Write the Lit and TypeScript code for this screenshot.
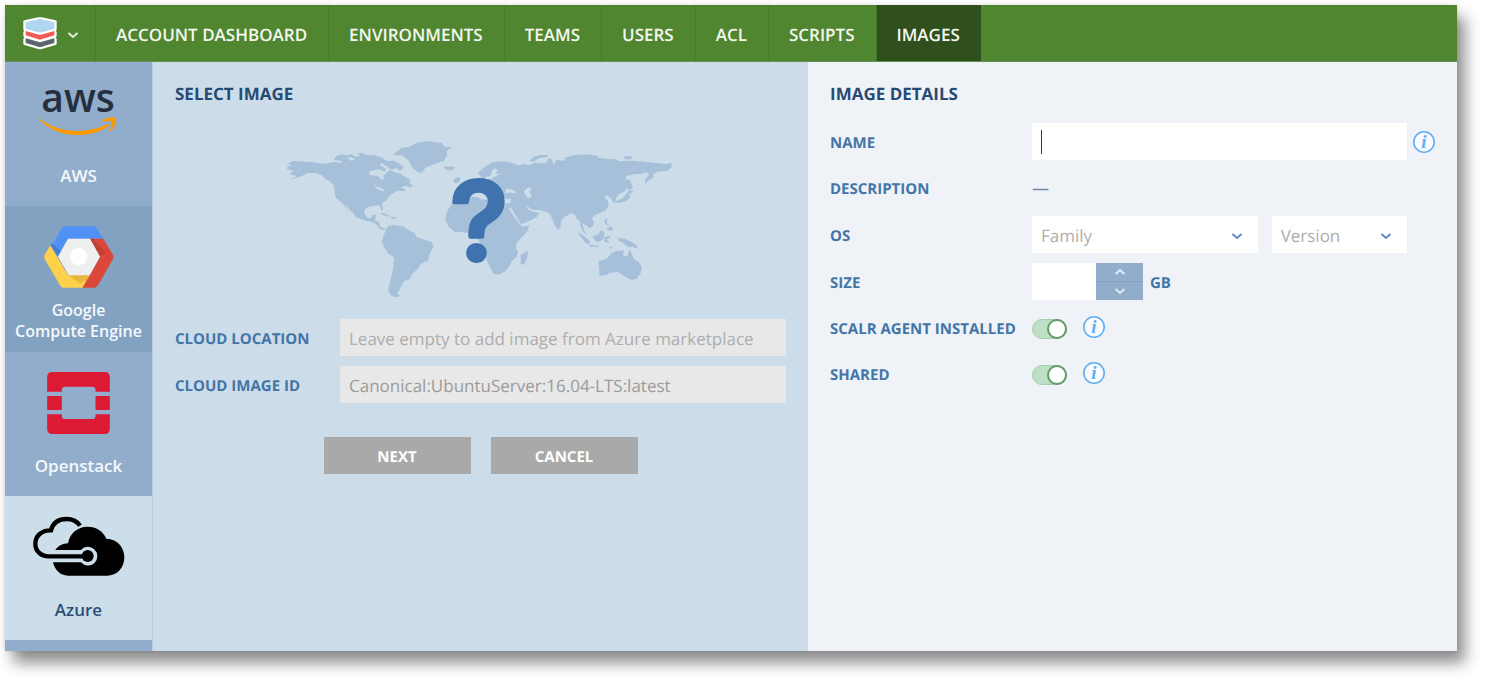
import { LitElement, html, css, svg, nothing } from "lit";
import { customElement, property, state } from "lit/decorators.js";
import { classMap } from "lit/directives/class-map.js";

const NAV = ["ACCOUNT DASHBOARD", "ENVIRONMENTS", "TEAMS", "USERS", "ACL", "SCRIPTS", "IMAGES"];

const chevron = (up = false) => html`<svg class="chevron" width="12" height="8" viewBox="0 0 12 8" aria-hidden="true">
  <path d=${up ? "M1.5 6 L6 2 L10.5 6" : "M1.5 2 L6 6 L10.5 2"} fill="none" stroke="currentColor" stroke-width="2"/>
</svg>`;

const awsLogo = html`<svg width="80" height="72" viewBox="39 66 80 72" role="img" aria-label="aws">
  <text x="78" y="112" text-anchor="middle" font-family="Open Sans, sans-serif" font-size="39" font-weight="600" fill="#252f3e">aws</text>
  <path d="M40 119 C52 128 65 131 78 131 C88 131 99 128 108 124 Q110 124 109 126 C101 132 89 135 77 135 C62 135 49 129 40 120.500 Z" fill="#ff9900"/>
  <path d="M102 120.500 C105 117.500 113 117 116 118 C117 122 114 128 111 131 Q109.500 131 110 129.500 C111 127 113 123 112 121.500 C110 120.500 106 121 102.500 121.500 Z" fill="#ff9900"/>
</svg>`;

const googleLogo = html`<svg width="70" height="62" viewBox="0 0 210 186" aria-hidden="true">
  <path d="M24 58 L52 8 Q56 1 64 1 H148 Q154 1 158 7 L178 38 H72 L42 90 Z" fill="#5091f5"/>
  <path d="M178 38 L207 86 Q210 92 207 99 L162 178 Q158 185 150 185 H115 L168 92 L138 38 Z" fill="#da483b"/>
  <path d="M19 58 L72 148 H137 L115 185 H58 Q52 185 48 178 L2 99 Q-1 92 2 86 Z" fill="#ffd04a"/>
  <path d="M138 38 H148 L186 80 L168 92 Z" fill="#b93c32" opacity=".7"/>
  <path d="M72 148 H137 L128 163 L108 172 Z" fill="#e0ac38" opacity=".7"/>
  <path d="M19 58 L24 52 L50 76 L42 92 Z" fill="#3f77d3" opacity=".8"/>
  <path d="M72 38 H138 L168 92 L137 148 H74 L42 92 Z" fill="#efefef"/>
  <circle cx="104" cy="92" r="26" fill="#fff"/>
</svg>`;

const openstackLogo = html`<svg width="63" height="62" viewBox="0 0 188 186" aria-hidden="true" fill="#dc1a33">
  <path d="M0 59 V16 Q0 0 16 0 H172 Q188 0 188 16 V59 H145 V54 Q145 44 135 44 H54 Q44 44 44 54 V59 Z"/>
  <path d="M0 72 H44 V114 H0 Z M145 72 H188 V114 H145 Z"/>
  <path d="M0 127 V170 Q0 186 16 186 H172 Q188 186 188 170 V127 H145 V131 Q145 141 135 141 H54 Q44 141 44 131 V127 Z"/>
</svg>`;

const azureLogo = html`<svg width="92" height="60" viewBox="98 64 276 180" aria-hidden="true">
  <path d="M165 166 C175 152 188 147 203 146 C208 116 232 96 261 96 C288 96 308 109 318 132 C350 132 372 158 372 187 C372 220 350 243 320 243 H203 C180 243 163 226 158 203 H242 A28 28 0 1 0 242 166 Z" fill="#000"/>
  <circle cx="262" cy="184" r="18" fill="#000"/>
  <path d="M262 185 H146 C120 185 105 168 105 147 C105 124 124 106 152 107 C158 84 176 73 199 73 C217 73 230 79 239 93" fill="none" stroke="#000" stroke-width="13"/>
</svg>`;

const PROVIDERS = [
  { name: "AWS", logo: awsLogo, kind: "aws" },
  { name: "Google\nCompute Engine", logo: googleLogo, kind: "google" },
  { name: "Openstack", logo: openstackLogo, kind: "openstack" },
  { name: "Azure", logo: azureLogo, kind: "azure" },
];

const americas = svg`<g transform="translate(280 130) scale(.33333)">
  <path d="M18 112 L34 106 24 100 40 93 58 94 100 97 128 101 165 96 188 99 182 92 162 90 168 79 185 73 200 76 214 72 225 80 242 78 232 70 246 68 262 76 280 74 304 82 320 92 342 92 372 110 362 122 345 114 336 120 318 108 304 98 300 106 318 116 316 126 300 118 282 120 266 126 272 136 294 138 302 148 312 148 310 138 320 128 328 120 350 128 364 132 374 140 392 150 388 160 400 168 392 172 378 168 362 172 376 178 374 184 354 182 340 190 330 196 320 210 306 220 310 240 304 240 298 226 280 228 262 232 254 240 254 252 262 264 274 264 276 254 288 254 286 266 284 272 298 276 300 290 312 294 320 296 312 300 300 296 288 282 274 276 250 270 228 262 218 248 206 236 196 222 204 242 214 250 204 244 190 222 168 204 164 188 163 168 150 154 136 148 128 138 112 130 84 128 66 138 32 149 50 138 28 132 40 122 22 118 Z"/>
  <path d="M338 75 L364 54 388 50 412 38 444 33 486 39 492 50 516 52 500 64 502 76 492 92 458 104 438 112 424 129 412 126 396 112 384 90 366 76 Z"/>
  <path d="M490 110 L526 110 522 117 508 122 496 118 Z M298 248 L314 250 328 258 324 260 308 254 Z M330 260 L348 262 346 267 334 266 Z"/>
  <path d="M318 300 L324 288 344 284 372 290 388 302 404 308 410 322 430 328 454 336 462 348 450 368 444 392 422 402 414 416 396 432 390 446 372 454 366 464 358 480 352 490 362 499 346 502 330 494 325 478 332 446 340 412 342 382 326 372 312 352 306 336 310 318 Z"/>
  <path d="M202 84 L216 82 226 90 212 92 Z M280 160 L290 170 304 174 316 182 308 184 290 176 Z" fill="#ccdee9"/>
</g>`;

const eurasia = svg`<g transform="translate(470 130) scale(.33333)">
  <path d="M24 128 L40 114 64 98 92 94 118 96 144 106 160 102 178 106 194 98 222 100 234 94 232 86 244 86 252 106 258 90 286 92 282 84 310 76 352 73 384 78 386 84 410 86 438 88 446 94 470 92 488 92 504 94 528 96 550 98 588 102 604 98 605 112 592 122 560 126 548 134 550 142 538 150 524 162 526 146 538 134 528 126 514 132 496 132 470 138 466 148 480 150 488 172 480 184 472 174 466 182 448 192 440 200 434 222 424 206 412 196 402 200 414 212 416 226 408 240 390 250 374 256 366 264 372 278 368 290 358 294 346 284 336 280 342 300 350 312 342 310 330 286 330 274 320 268 316 256 304 250 282 262 272 276 272 290 264 300 256 288 246 266 242 256 232 246 208 240 190 240 170 228 174 238 190 246 208 248 202 260 180 272 154 283 148 276 136 254 122 232 116 236 134 262 150 284 160 290 178 286 172 304 156 322 140 338 138 354 144 366 140 380 126 392 120 406 106 424 86 434 70 432 62 416 50 390 48 372 34 350 24 326 12 316 -8 308 -26 306 -46 306 -64 290 -74 270 -70 248 -62 232 -48 214 -36 206 -10 202 20 200 34 208 60 210 90 216 104 222 110 208 100 200 84 200 64 188 42 184 18 176 -10 184 -30 194 -44 192 -38 172 -20 170 -26 160 -8 152 20 146 34 144 28 132 Z"/>
  <path d="M178 94 L188 82 206 76 234 74 232 80 208 84 194 94 Z M462 79 L486 78 482 84 488 88 464 88 Z M476 182 L490 182 488 188 478 190 480 202 470 212 452 218 436 219 442 210 456 206 466 196 Z"/>
  <path d="M152 374 L174 362 172 382 162 404 152 402 Z M404 270 L412 264 410 278 418 284 410 286 404 278 Z M410 296 L422 288 430 298 420 303 Z M322 304 L342 318 360 334 358 344 346 338 332 320 Z M358 344 L386 347 386 351 360 350 Z M368 318 L384 314 394 300 404 308 400 328 386 336 374 332 Z M402 322 L416 318 422 322 410 328 418 338 404 336 Z M416 352 L430 350 420 357 Z M442 324 L464 326 484 336 498 344 504 356 488 350 474 352 460 338 446 332 Z"/>
  <path d="M386 394 L410 386 424 370 440 362 462 362 458 374 472 380 478 358 486 372 492 388 506 396 516 412 512 430 500 446 484 450 468 442 456 434 444 426 420 428 408 436 388 438 388 418 Z"/>
  <path d="M-50 150 L-40 142 -28 144 -32 156 -46 160 Z"/>
  <g fill="#ccdee9">
    <path d="M46 142 L62 138 66 122 78 114 82 122 76 132 96 130 78 138 64 146 50 150 Z M104 190 L110 176 124 178 140 186 136 190 118 188 Z M162 182 L176 172 186 176 178 184 186 200 174 204 164 192 Z M92 208 L124 206 120 220 108 220 Z"/>
  </g>
</g>`;

@customElement("info-tip")
class InfoTip extends LitElement {
  @property() label = "";
  static styles = css`
    :host { display: inline-flex; }
    button { display: block; padding: 0; border: 0; background: none; cursor: pointer; }
    svg { display: block; }
  `;
  render() {
    return html`<button type="button" aria-label=${this.label}>
      <svg width="22" height="22" viewBox="0 0 22 22" aria-hidden="true">
        <circle cx="11" cy="11" r="10.200" fill="#f8fbff" stroke="#62adf0" stroke-width="1.600"/>
        <text x="11" y="17" text-anchor="middle" font-family="Liberation Serif, serif" font-style="italic" font-weight="700" font-size="19" fill="#62adf0">i</text>
      </svg>
    </button>`;
  }
}

@customElement("app-root")
class AppRoot extends LitElement {
  @state() provider = "azure";

  static styles = css`
    * { box-sizing: border-box; }
    :host {
      display: flex;
      box-sizing: border-box;
      min-height: 100vh;
      padding: 5px 29px 29px 5px;
      background: #fff;
      font-family: "Open Sans", sans-serif;
      font-size: 17px;
      line-height: 22px;
      text-rendering: geometricPrecision;
    }
    svg { display: block; }
    .window {
      flex: 1;
      display: flex;
      flex-direction: column;
      box-shadow: 8px 12px 14px rgba(0, 0, 0, .44), 0 0 5px rgba(0, 0, 0, .12);
    }
    .top { display: flex; height: 57px; background: #508630; border-bottom: 1px solid #648f52; }
    .brand {
      display: flex;
      align-items: center;
      gap: 10px;
      width: 91px;
      padding: 0 0 0 18px;
      border: 0;
      border-right: 1px solid #467a2b;
      background: none;
      color: #e4edde;
    }
    .brand .chevron { margin-top: 4px; }
    .nav { display: flex; }
    .nav a {
      display: flex;
      align-items: center;
      padding: 3px 21px 0 20px;
      border-right: 1px solid #467a2b;
      color: #f3f7f0;
      font-weight: 600;
      text-decoration: none;
    }
    .nav a.on { background: #2f4f1d; border: 0; }
    .body { flex: 1; display: grid; grid-template-columns: 148px 655fr 649fr; }
    .side { display: flex; flex-direction: column; background: #92adcb; border-right: 1px solid #bbd0e2; }
    .tile {
      display: flex;
      flex-direction: column;
      align-items: center;
      height: 144px;
      padding: 20px 8px 0;
      border: 0;
      background: none;
      color: #f5f8fb;
      font: inherit;
      font-weight: 600;
      line-height: 21px;
      cursor: pointer;
    }
    .tile svg { flex: none; }
    .tile .name { margin-top: auto; padding-bottom: 20px; white-space: pre-line; }
    .tile.aws { padding-top: 4px; }
    .tile.google { height: 146px; background: #82a2c2; font-size: 16px; }
    .tile.google .name { padding-bottom: 10px; }
    .tile.on { background: #ccdee9; color: #2c4d77; }
    .panel { padding: 21px 22px; }
    .select { background: #ccdde9; }
    .details { background: #eff3f8; }
    h2 { margin: 0; color: #264a73; font-size: 17px; line-height: 22px; font-weight: 700; }
    .map { margin: 35px auto 21px; }
    .rows { display: flex; flex-direction: column; gap: 10px; }
    .details .rows { margin-top: 18px; }
    .row { display: flex; align-items: center; min-height: 36px; }
    .key { flex: none; width: 165px; padding-top: 2px; color: #4375a7; font-size: 15px; font-weight: 700; }
    .details .key { width: 202px; }
    .field {
      display: block;
      width: 100%;
      min-width: 0;
      height: 37px;
      padding: 2px 9px 0;
      border: 0;
      border-radius: 0;
      outline: 0;
      background-color: #fff;
      color: #333;
      font: inherit;
      text-rendering: inherit;
      appearance: none;
    }
    .field::placeholder { color: #aeaeae; opacity: 1; }
    .select .field { background: #e8e8e8; color: #9b9b9b; }
    .field.name {
      background-image: linear-gradient(#1f3a5f, #1f3a5f);
      background-repeat: no-repeat;
      background-size: 1px 24px;
      background-position: 9px center;
      caret-color: transparent;
    }
    .row info-tip { flex: none; margin-left: 6px; }
    .dash { color: #6f8aa9; font-weight: 600; }
    .pickers { flex: 1; display: grid; grid-template-columns: 225fr 135fr; gap: 14px; padding-right: 28px; }
    .picker { display: grid; align-items: center; color: #5c8cc0; }
    .picker > * { grid-area: 1 / 1; }
    .picker .chevron { justify-self: end; margin: 2px 15px 0 0; pointer-events: none; }
    .picker .field { color: #aeaeae; }
    .number { width: 64px; }
    .steps { display: grid; width: 47px; height: 37px; background: #92adcb; color: #e1eaf3; }
    .steps button { display: grid; place-items: center; padding: 0; border: 0; background: none; color: inherit; }
    .steps button + button { border-top: 1px solid #83a1c2; }
    .unit { margin-left: 7px; padding-top: 2px; color: #4375a7; font-size: 15px; font-weight: 700; }
    .switch {
      display: flex;
      justify-content: flex-end;
      appearance: none;
      width: 35px;
      height: 20px;
      margin: 2px 0 0;
      border-radius: 10px;
      border: 1px solid #a3cfae;
      background: #bcdfc6;
    }
    .switch::before {
      content: "";
      width: 20px;
      height: 20px;
      margin: -1px;
      box-sizing: border-box;
      border: 2px solid #62996a;
      border-radius: 50%;
      background: #fff;
    }
    .switch:not(:checked) { justify-content: flex-start; background: #ddd; }
    .row .switch + info-tip { margin-left: 16px; padding-bottom: 3px; }
    .actions { display: flex; justify-content: center; gap: 20px; margin-top: 34px; }
    .actions button {
      width: 147px;
      height: 37px;
      padding: 2px 0 0;
      border: 0;
      background: #a9a9a9;
      color: #fff;
      font: inherit;
      font-size: 15px;
      font-weight: 700;
      text-rendering: inherit;
    }
  `;

  render() {
    return html`<div class="window">
      <header class="top">
        <button class="brand" aria-label="Scope menu">
          <svg width="34" height="33" viewBox="0 0 102 99" aria-hidden="true">
            <path d="M1 13 Q1 11 4 10 L46 1 Q51 0 56 1 L98 10 Q101 11 101 13 V38 L98 41 101 44 V58 L98 61 101 65 V80 Q101 83 98 84 L56 96 Q51 98 46 96 L4 84 Q1 83 1 80 V65 L4 61 1 58 V44 L4 41 1 38 Z" fill="#fff"/>
            <path d="M8 16 L51 5 94 16 V35 L51 47 8 35 Z" fill="#afd6ee"/>
            <path d="M8 42 L51 54 94 42 V55 L51 68 8 55 Z" fill="#f05b55"/>
            <path d="M8 64 L51 76 94 64 V78 L51 91 8 78 Z" fill="#5c666b"/>
          </svg>
          ${chevron()}
        </button>
        <nav class="nav">
          ${NAV.map((n) => html`<a href="#" class=${classMap({ on: n === "IMAGES" })} aria-current=${n === "IMAGES" ? "page" : nothing}>${n}</a>`)}
        </nav>
      </header>
      <div class="body">
        <aside class="side">
          ${PROVIDERS.map((p) => html`<button
            class=${classMap({ tile: true, [p.kind]: true, on: p.kind === this.provider })}
            @click=${() => (this.provider = p.kind)}
          >${p.logo}<span class="name">${p.name}</span></button>`)}
        </aside>
        <section class="panel select">
          <h2>SELECT IMAGE</h2>
          <svg class="map" width="388" height="158" viewBox="287 140 388 158" role="img" aria-label="Location unknown">
            <g fill="#a7c0da">${americas}${eurasia}</g>
            <text x="479" y="260" text-anchor="middle" font-family="Inter, sans-serif" font-size="108" font-weight="500" fill="#4073ae" stroke="#4073ae" stroke-width="5" stroke-linejoin="round">?</text>
          </svg>
          <div class="rows">
            <div class="row">
              <label class="key" for="location">CLOUD LOCATION</label>
              <input class="field" id="location" placeholder="Leave empty to add image from Azure marketplace">
            </div>
            <div class="row">
              <label class="key" for="image">CLOUD IMAGE ID</label>
              <input class="field" id="image" value="Canonical:UbuntuServer:16.04-LTS:latest">
            </div>
          </div>
          <div class="actions"><button>NEXT</button><button>CANCEL</button></div>
        </section>
        <section class="panel details">
          <h2>IMAGE DETAILS</h2>
          <div class="rows">
            <div class="row">
              <label class="key" for="name">NAME</label>
              <input class="field name" id="name">
              <info-tip label="About the name"></info-tip>
            </div>
            <div class="row"><span class="key">DESCRIPTION</span><span class="dash">—</span></div>
            <div class="row">
              <label class="key" for="family">OS</label>
              <div class="pickers">
                <div class="picker"><select class="field" id="family"><option>Family</option></select>${chevron()}</div>
                <div class="picker"><select class="field" aria-label="OS version"><option>Version</option></select>${chevron()}</div>
              </div>
            </div>
            <div class="row">
              <label class="key" for="size">SIZE</label>
              <input class="field number" id="size" inputmode="numeric">
              <div class="steps">
                <button aria-label="Increase">${chevron(true)}</button>
                <button aria-label="Decrease">${chevron()}</button>
              </div>
              <span class="unit">GB</span>
            </div>
            <div class="row">
              <label class="key" for="agent">SCALR AGENT INSTALLED</label>
              <input type="checkbox" class="switch" id="agent" checked>
              <info-tip label="About the agent"></info-tip>
            </div>
            <div class="row">
              <label class="key" for="shared">SHARED</label>
              <input type="checkbox" class="switch" id="shared" checked>
              <info-tip label="About sharing"></info-tip>
            </div>
          </div>
        </section>
      </div>
    </div>`;
  }
}
